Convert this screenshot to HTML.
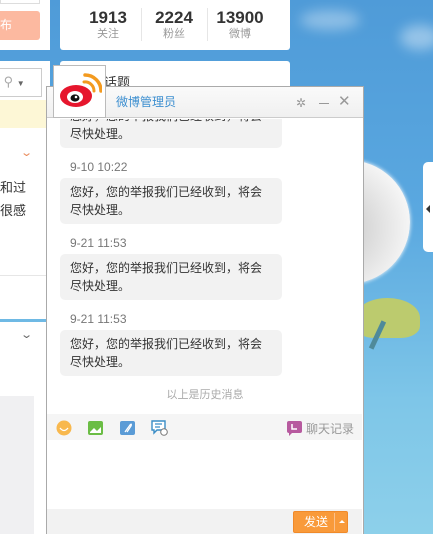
<!DOCTYPE html>
<html><head><meta charset="utf-8"><style>
*{margin:0;padding:0;box-sizing:border-box}
body{width:433px;height:534px;overflow:hidden;position:relative;font-family:"Liberation Sans","Noto Sans CJK SC",sans-serif;background:linear-gradient(180deg,#4f9bd8 0%,#5aa8e0 40%,#7ec6e8 75%,#8dd0ea 100%)}
.abs{position:absolute}
.w{background:#fff}
.num{position:absolute;top:8px;font-weight:bold;font-size:17px;color:#333;text-align:center}
.lbl{position:absolute;top:25px;font-size:11px;color:#999;text-align:center}
.time{position:absolute;left:70px;font-size:12px;color:#777}
.bub{position:absolute;left:60px;width:222px;background:#f2f2f2;border-radius:5px;padding:5px 0 5px 10px;font-size:12px;line-height:18px;color:#333}
</style></head><body>
<div class="abs" style="left:300px;top:10px;width:60px;height:20px;border-radius:50%;background:rgba(255,255,255,.35);filter:blur(6px)"></div>
<div class="abs" style="left:400px;top:25px;width:40px;height:25px;border-radius:50%;background:rgba(255,255,255,.4);filter:blur(6px)"></div>
<div class="abs" style="left:286px;top:160px;width:124px;height:124px;border-radius:50%;background:radial-gradient(circle at 40% 55%,#c4c4c4,#e2e2e2 45%,#f6f6f6 75%,#fff);box-shadow:0 0 4px #fff"></div>
<div class="abs" style="left:355px;top:298px;width:65px;height:40px;border-radius:50% 50% 30% 30%;background:#bccb6e"></div>
<div class="abs" style="left:375px;top:320px;width:5px;height:30px;background:#4f8a9a;transform:rotate(25deg)"></div>
<div class="abs" style="left:423px;top:162px;width:12px;height:90px;border-radius:5px 0 0 5px;background:#fff"></div>
<div class="abs" style="left:426px;top:205px;width:0;height:0;border-top:4px solid transparent;border-bottom:4px solid transparent;border-right:4px solid #333"></div>

<div class="abs w" style="left:0;top:0;width:50px;height:50px"></div>
<div class="abs" style="left:0;top:0;width:40px;height:4px;border:1px solid #ddd;border-top:0;background:#fff"></div>
<div class="abs" style="left:0;top:11px;width:40px;height:29px;background:#fcb9a0;border-radius:0 3px 3px 0;color:#fff;font-size:12px;line-height:29px">布</div>
<div class="abs w" style="left:0;top:61px;width:50px;height:258px"></div>
<div class="abs" style="left:0;top:68px;width:42px;height:29px;border:1px solid #ccc;border-left:0;background:#fff;font-size:13px;color:#aaa;line-height:26px">&nbsp;⚲ <span style="font-size:8px;color:#666">▼</span></div>
<div class="abs" style="left:0;top:100px;width:50px;height:28px;background:#fdf7d6"></div>
<div class="abs" style="left:22px;top:146px;font-size:11px;color:#e98a5a;transform:scaleX(1.4)">⌄</div>
<div class="abs" style="left:0;top:176px;font-size:13px;line-height:23px;color:#333">和过<br>很感</div>
<div class="abs" style="left:0;top:275px;width:50px;height:1px;background:#e6e6e6"></div>
<div class="abs w" style="left:0;top:322px;width:50px;height:212px"></div>
<div class="abs" style="left:22px;top:328px;font-size:11px;color:#666;transform:scaleX(1.4)">⌄</div>
<div class="abs" style="left:0;top:396px;width:34px;height:138px;background:#f0f0f2"></div>

<div class="abs w" style="left:60px;top:0;width:230px;height:50px;border-radius:0 0 3px 3px"></div>
<div class="num" style="left:80px;width:56px">1913</div><div class="lbl" style="left:80px;width:56px">关注</div>
<div class="abs" style="left:141px;top:8px;width:1px;height:33px;background:#e6e6e6"></div>
<div class="num" style="left:146px;width:56px">2224</div><div class="lbl" style="left:146px;width:56px">粉丝</div>
<div class="abs" style="left:207px;top:8px;width:1px;height:33px;background:#e6e6e6"></div>
<div class="num" style="left:210px;width:60px">13900</div><div class="lbl" style="left:210px;width:60px">微博</div>
<div class="abs w" style="left:60px;top:61px;width:230px;height:40px;border-radius:3px"></div>
<div class="abs" style="left:104px;top:72px;font-size:13px;color:#333">话题</div>

<div class="abs w" style="left:46px;top:86px;width:318px;height:448px;border:1px solid #aaa;border-bottom:0"></div>
<div class="abs" style="left:47px;top:87px;width:316px;height:31px;background:linear-gradient(#fafafa,#f0f0f0);border-bottom:1px solid #ccc"></div>
<div class="abs" style="left:116px;top:93px;font-size:12px;color:#3d8fd0">微博管理员</div>
<div class="abs" style="left:296px;top:96px;font-size:12px;color:#999">✲</div>
<div class="abs" style="left:319px;top:103px;width:10px;height:1px;background:#999"></div>
<div class="abs" style="left:338px;top:93px;font-size:15px;color:#999;line-height:18px">✕</div>

<div class="abs" style="left:47px;top:119px;width:316px;height:295px;overflow:hidden">
 <div class="bub" style="left:13px;top:-17px">您好，您的举报我们已经收到，将会<br>尽快处理。</div>
 <div class="time" style="left:23px;top:41px">9-10 10:22</div>
 <div class="bub" style="left:13px;top:59px">您好，您的举报我们已经收到，将会<br>尽快处理。</div>
 <div class="time" style="left:23px;top:117px">9-21 11:53</div>
 <div class="bub" style="left:13px;top:135px">您好，您的举报我们已经收到，将会<br>尽快处理。</div>
 <div class="time" style="left:23px;top:193px">9-21 11:53</div>
 <div class="bub" style="left:13px;top:211px">您好，您的举报我们已经收到，将会<br>尽快处理。</div>
 <div class="abs" style="left:0;width:316px;top:267px;text-align:center;font-size:11px;color:#aaa">以上是历史消息</div>
</div>
<div class="abs w" style="left:53px;top:65px;width:53px;height:53px;border:1px solid #bbb"></div>
<svg class="abs" style="left:58px;top:72px" width="44" height="38" viewBox="0 0 44 38">
<ellipse cx="18" cy="24" rx="16" ry="11" fill="#e6162d"/>
<ellipse cx="17" cy="25" rx="8" ry="6" fill="#fff"/>
<ellipse cx="17" cy="26" rx="4.5" ry="3.6" fill="#111"/>
<circle cx="18" cy="25" r="1.3" fill="#fff"/>
<path d="M26 10 A9 9 0 0 1 36 19" stroke="#f39a1f" stroke-width="3" fill="none" stroke-linecap="round"/>
<path d="M27 3 A16 16 0 0 1 43 19" stroke="#f39a1f" stroke-width="3.5" fill="none" stroke-linecap="round"/>
</svg>

<div class="abs" style="left:47px;top:414px;width:315px;height:26px;background:#f5f5f5"></div>
<svg class="abs" style="left:56px;top:420px" width="16" height="16"><circle cx="8" cy="8" r="7.5" fill="#f8b84e"/><path d="M4 8 Q8 13 12 8" stroke="#fff" stroke-width="1.3" fill="none"/></svg>
<svg class="abs" style="left:88px;top:421px" width="15" height="14"><rect width="15" height="14" rx="2" fill="#6bbd45"/><path d="M2 11 L6 7 L9 10 L13 6 L13 12 L2 12Z" fill="#fff"/></svg>
<svg class="abs" style="left:120px;top:421px" width="15" height="14"><rect width="15" height="14" rx="2" fill="#5a9bd6"/><path d="M5 11 L10 4 Q12 2 11 5 L7 11" stroke="#fff" stroke-width="1.3" fill="none"/></svg>
<svg class="abs" style="left:151px;top:420px" width="17" height="16"><path d="M1 1 H14 V10 H6 L3 13 V10 H1Z" stroke="#3a8dc6" stroke-width="1.4" fill="#fff"/><path d="M4 4 H11 M4 7 H9" stroke="#3a8dc6" stroke-width="1.2"/><circle cx="13" cy="12" r="3.3" fill="#fff" stroke="#777" stroke-width="1"/></svg>
<svg class="abs" style="left:287px;top:421px" width="15" height="15"><rect width="15" height="12" rx="2" fill="#b75a9f"/><path d="M2 12 L2 15 L5 12Z" fill="#b75a9f"/><path d="M5 3 V8 H10" stroke="#fff" stroke-width="1.5" fill="none"/></svg>
<div class="abs" style="left:306px;top:420px;font-size:12px;color:#999">聊天记录</div>

<div class="abs" style="left:47px;top:509px;width:315px;height:25px;background:#f2f2f2"></div>
<div class="abs" style="left:293px;top:511px;width:55px;height:22px;background:#f99a3a;border:1px solid #f08a2a;border-radius:2px;color:#fff;font-size:12px;line-height:20px;padding-left:10px">发送</div>
<div class="abs" style="left:334px;top:513px;width:1px;height:18px;background:#fcc08a"></div>
<div class="abs" style="left:339px;top:520px;width:0;height:0;border-left:3px solid transparent;border-right:3px solid transparent;border-bottom:3px solid #fff"></div>
</body></html>
